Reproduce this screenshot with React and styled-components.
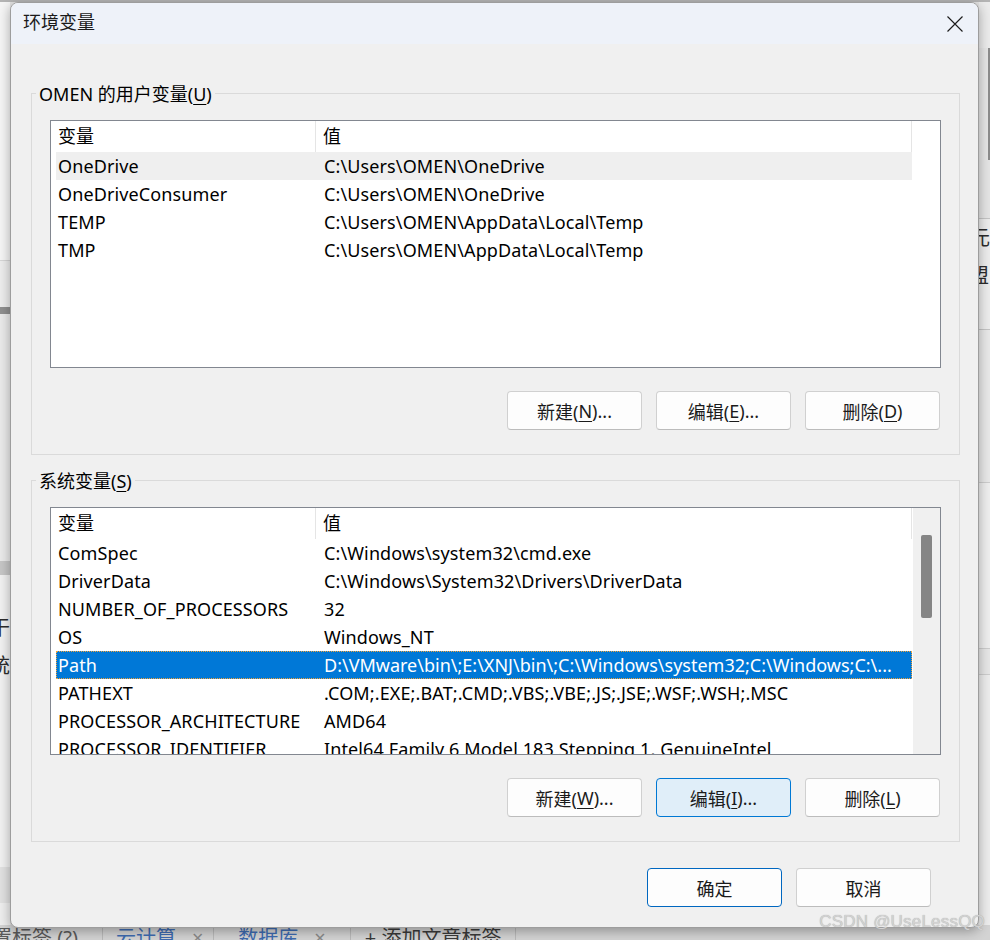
import React from 'react'
import styled, { createGlobalStyle } from 'styled-components'

const GlobalStyle = createGlobalStyle`
  html, body {
    margin: 0;
    padding: 0;
  }
  body {
    font-family: "Noto Sans", "Noto Sans CJK SC", sans-serif;
    background: #dcdcdc;
  }
`

const Screen = styled.div`
  position: relative;
  width: 990px;
  height: 940px;
  overflow: hidden;
`

/* page behind the dialog */
const Backdrop = styled.div`
  height: 100%;
  display: flex;
  flex-direction: column;
  background: #e2e2e2;
`
const Workspace = styled.div`
  flex: 1;
  display: flex;
  justify-content: space-between;
  border-top: 2px solid #b4b4b4;
`
const Pane = styled.div`
  width: ${p => p.w}px;
  display: flex;
  flex-direction: column;
  overflow: hidden;
`
const PaneBlock = styled.div`
  height: ${p => (p.h ? `${p.h}px` : 'auto')};
  flex: ${p => (p.h ? 'none' : 1)};
  background: ${p => p.bg || 'transparent'};
  border-bottom: ${p => (p.line ? `1px solid ${p.line}` : 'none')};
  padding-top: ${p => p.top || 0}px;
  display: flex;
  flex-direction: column;
  overflow: hidden;
`
const SideGlyph = styled.span`
  font-size: 20px;
  line-height: 38px;
  color: #2b2b2b;
  white-space: nowrap;
  margin-left: ${p => p.shift || 0}px;
`
const TagBar = styled.div`
  height: 15px;
  flex: none;
  display: flex;
  align-items: flex-start;
  background: #d3d3d3;
  overflow: hidden;
  font-size: 20px;
  line-height: 26px;
`
const Tag = styled.span`
  display: flex;
  gap: 16px;
  padding: 0 ${p => p.right || 14}px 0 ${p => p.left || 14}px;
  border-right: 1px solid #b9b9b9;
  color: ${p => p.color || '#5a5a5a'};
  white-space: nowrap;
  margin-left: ${p => p.shift || 0}px;
`
const TagClose = styled.span`
  color: #8a8a8a;
`

/* dialog window */
const Dialog = styled.div`
  position: absolute;
  left: 10px;
  top: 2px;
  width: 969px;
  height: 926px;
  box-sizing: border-box;
  border: 1px solid #9d9d9d;
  border-radius: 8px;
  overflow: hidden;
  background: #f0f0f0;
  box-shadow: 0 3px 12px rgba(0, 0, 0, 0.32);
  display: flex;
  flex-direction: column;
  color: #000;
`
const TitleBar = styled.div`
  height: 41px;
  flex: none;
  display: flex;
  align-items: center;
  justify-content: space-between;
  padding-left: 12px;
  background: #eef2f9;
`
const Title = styled.span`
  font-size: 18px;
  line-height: 24px;
  margin-bottom: 3px;
  color: #1a1a1a;
`
const CloseButton = styled.div`
  width: 46px;
  height: 41px;
  display: flex;
  align-items: center;
  justify-content: center;
`
const Body = styled.div`
  flex: 1;
  display: flex;
  flex-direction: column;
  padding: 49px 18px 0 20px;
`
const Group = styled.div`
  display: flex;
  flex-direction: column;
  border: 1px solid #dadada;
  padding: 0 18px 24px 18px;
  margin-top: ${p => p.gap || 0}px;
`
const Legend = styled.span`
  align-self: flex-start;
  height: 24px;
  line-height: 24px;
  margin: -12px 0 0 -14px;
  padding: 0 3px;
  background: #f0f0f0;
  font-size: 18px;
  white-space: nowrap;
`
const Key = styled.u`
  text-decoration: underline;
  text-underline-offset: 3px;
  text-decoration-thickness: 1px;
`

/* list view */
const ListView = styled.div`
  height: 248px;
  margin-top: 14px;
  box-sizing: border-box;
  border: 1px solid #828790;
  background: #fff;
  display: flex;
  overflow: hidden;
`
const Columns = styled.div`
  width: 856px;
  padding-left: 5px;
  flex: none;
`
const HeaderRow = styled.div`
  height: 31px;
  display: flex;
`
const HeadCell = styled.div`
  width: ${p => (p.w ? `${p.w}px` : 'auto')};
  flex: ${p => (p.w ? 'none' : 1)};
  box-sizing: border-box;
  padding-left: ${p => p.pad}px;
  border-right: 1px solid #e5e5e5;
  font-size: 18px;
  line-height: 31px;
  white-space: nowrap;
`
const Row = styled.div`
  height: 28px;
  display: flex;
  box-sizing: border-box;
  background: ${p => (p.selected ? '#0078d7' : p.hover ? '#efefef' : 'transparent')};
  color: ${p => (p.selected ? '#fff' : '#000')};
  outline: ${p => (p.selected ? '1px dotted #f3a33a' : 'none')};
  outline-offset: -1px;
`
const Cell = styled.div`
  width: ${p => (p.w ? `${p.w}px` : 'auto')};
  flex: ${p => (p.w ? 'none' : 1)};
  box-sizing: border-box;
  padding-left: ${p => p.pad}px;
  font-size: 18px;
  line-height: 28px;
  letter-spacing: ${p => (p.tight ? 0 : 0.12)}px;
  white-space: nowrap;
  overflow: hidden;
`
const ScrollTrack = styled.div`
  flex: 1;
  background: #f0f0f0;
  border-left: 1px solid #fff;
  padding: 27px 0 0 8px;
`
const ScrollThumb = styled.div`
  width: 11px;
  height: 83px;
  border-radius: 2px;
  background: #858585;
`

/* buttons */
const ButtonRow = styled.div`
  display: flex;
  justify-content: flex-end;
  gap: 14px;
  margin-top: ${p => p.gap || 23}px;
  padding-right: ${p => p.inset || 1}px;
`
const Button = styled.div`
  width: 135px;
  height: 39px;
  box-sizing: border-box;
  display: flex;
  align-items: center;
  justify-content: center;
  border: 1px solid ${p => (p.focused ? '#0078d4' : p.primary ? '#0067c0' : '#d0d0d0')};
  border-bottom-color: ${p => (p.focused ? '#0078d4' : p.primary ? '#0067c0' : '#bcbcbc')};
  border-radius: 4px;
  background: ${p => (p.focused ? '#e0eef9' : '#fdfdfd')};
  font-size: 18px;
  color: #1b1b1b;
  white-space: nowrap;
`

const Watermark = styled.div`
  position: absolute;
  right: 5px;
  top: 912px;
  font-family: "Liberation Sans", Arial, sans-serif;
  font-size: 17px;
  color: #d2d2d2;
  text-shadow: 0 0 1px #a0a0a0;
  letter-spacing: 0.2px;
`

const userVars = [
  { name: 'OneDrive', value: 'C:\\Users\\OMEN\\OneDrive', hover: true },
  { name: 'OneDriveConsumer', value: 'C:\\Users\\OMEN\\OneDrive' },
  { name: 'TEMP', value: 'C:\\Users\\OMEN\\AppData\\Local\\Temp' },
  { name: 'TMP', value: 'C:\\Users\\OMEN\\AppData\\Local\\Temp' },
]

const systemVars = [
  { name: 'ComSpec', value: 'C:\\Windows\\system32\\cmd.exe' },
  { name: 'DriverData', value: 'C:\\Windows\\System32\\Drivers\\DriverData' },
  { name: 'NUMBER_OF_PROCESSORS', value: '32' },
  { name: 'OS', value: 'Windows_NT' },
  {
    name: 'Path',
    value: 'D:\\VMware\\bin\\;E:\\XNJ\\bin\\;C:\\Windows\\system32;C:\\Windows;C:\\...',
    selected: true,
  },
  { name: 'PATHEXT', value: '.COM;.EXE;.BAT;.CMD;.VBS;.VBE;.JS;.JSE;.WSF;.WSH;.MSC' },
  { name: 'PROCESSOR_ARCHITECTURE', value: 'AMD64' },
  { name: 'PROCESSOR_IDENTIFIER', value: 'Intel64 Family 6 Model 183 Stepping 1, GenuineIntel' },
]

const CloseIcon = () => (
  <svg width="16" height="16" viewBox="0 0 16 16">
    <path d="M0.5 0.5 L15.5 15.5 M15.5 0.5 L0.5 15.5" stroke="#1c1c1c" strokeWidth="1.15" fill="none" />
  </svg>
)

const VarList = ({ rows, scroll }) => (
  <ListView>
    <Columns>
      <HeaderRow>
        <HeadCell w={260} pad={2}>变量</HeadCell>
        <HeadCell pad={7}>值</HeadCell>
      </HeaderRow>
      {rows.map(r => (
        <Row key={r.name} selected={r.selected} hover={r.hover}>
          <Cell w={260} pad={2}>{r.name}</Cell>
          <Cell pad={8} tight={r.selected}>{r.value}</Cell>
        </Row>
      ))}
    </Columns>
    {scroll ? (
      <ScrollTrack>
        <ScrollThumb />
      </ScrollTrack>
    ) : null}
  </ListView>
)

const App = () => {
  return (
    <Screen>
      <GlobalStyle />
      <Backdrop>
        <Workspace>
          <Pane w={10}>
            <PaneBlock h={258} bg="#f5f5f5" line="#d6d6d6" />
            <PaneBlock h={46} bg="#ededed" />
            <PaneBlock h={7} bg="#8f8f8f" />
            <PaneBlock h={247} bg="#eaeaea" />
            <PaneBlock h={14} bg="#c6c6c6" />
            <PaneBlock h={258} bg="#f1f1f1" top={34}>
              <SideGlyph shift={-10}>干</SideGlyph>
              <SideGlyph shift={-10}>统</SideGlyph>
            </PaneBlock>
            <PaneBlock h={36} bg="#e1e1e1" />
            <PaneBlock bg="#eeeeee" />
          </Pane>
          <Pane w={11}>
            <PaneBlock h={46} bg="#ebebeb" />
            <PaneBlock h={112} bg="#e6e6e6" style={{ borderLeft: '6px solid #e6e6e6', borderRight: '2px solid #8c8c8c' }} />
            <PaneBlock h={58} bg="#e4e4e4" line="#c4c4c4" />
            <PaneBlock h={110} bg="#ececec" line="#c4c4c4">
              <SideGlyph shift={-9}>元</SideGlyph>
              <SideGlyph shift={-10}>盟</SideGlyph>
            </PaneBlock>
            <PaneBlock h={152} bg="#e8e8e8" line="#cdcdcd" />
            <PaneBlock h={165} bg="#eeeeee" line="#cdcdcd" />
            <PaneBlock h={25} bg="#e6e6e6" line="#cdcdcd" />
            <PaneBlock bg="#ececec" />
          </Pane>
        </Workspace>
        <TagBar>
          <Tag shift={-32} left={24} right={24}>置标签 (?)</Tag>
          <Tag color="#3e6bb0" left={13} right={10}>云计算<TagClose>×</TagClose></Tag>
          <Tag color="#3e6bb0" left={24} right={24}>数据库<TagClose>×</TagClose></Tag>
          <Tag color="#3a3a3a" left={14} right={14}>+ 添加文章标签</Tag>
          <Tag left={60} right={60} />
        </TagBar>
      </Backdrop>

      <Dialog>
        <TitleBar>
          <Title>环境变量</Title>
          <CloseButton>
            <CloseIcon />
          </CloseButton>
        </TitleBar>
        <Body>
          <Group>
            <Legend>OMEN 的用户变量(<Key>U</Key>)</Legend>
            <VarList rows={userVars} />
            <ButtonRow>
              <Button>新建(<Key>N</Key>)...</Button>
              <Button>编辑(<Key>E</Key>)...</Button>
              <Button>删除(<Key>D</Key>)</Button>
            </ButtonRow>
          </Group>
          <Group gap={25}>
            <Legend>系统变量(<Key>S</Key>)</Legend>
            <VarList rows={systemVars} scroll />
            <ButtonRow>
              <Button>新建(<Key>W</Key>)...</Button>
              <Button focused>编辑(<Key>I</Key>)...</Button>
              <Button>删除(<Key>L</Key>)</Button>
            </ButtonRow>
          </Group>
          <ButtonRow gap={26} inset={29}>
            <Button primary>确定</Button>
            <Button>取消</Button>
          </ButtonRow>
        </Body>
      </Dialog>

      <Watermark>CSDN @UseLessQQ</Watermark>
    </Screen>
  )
}

export default App
